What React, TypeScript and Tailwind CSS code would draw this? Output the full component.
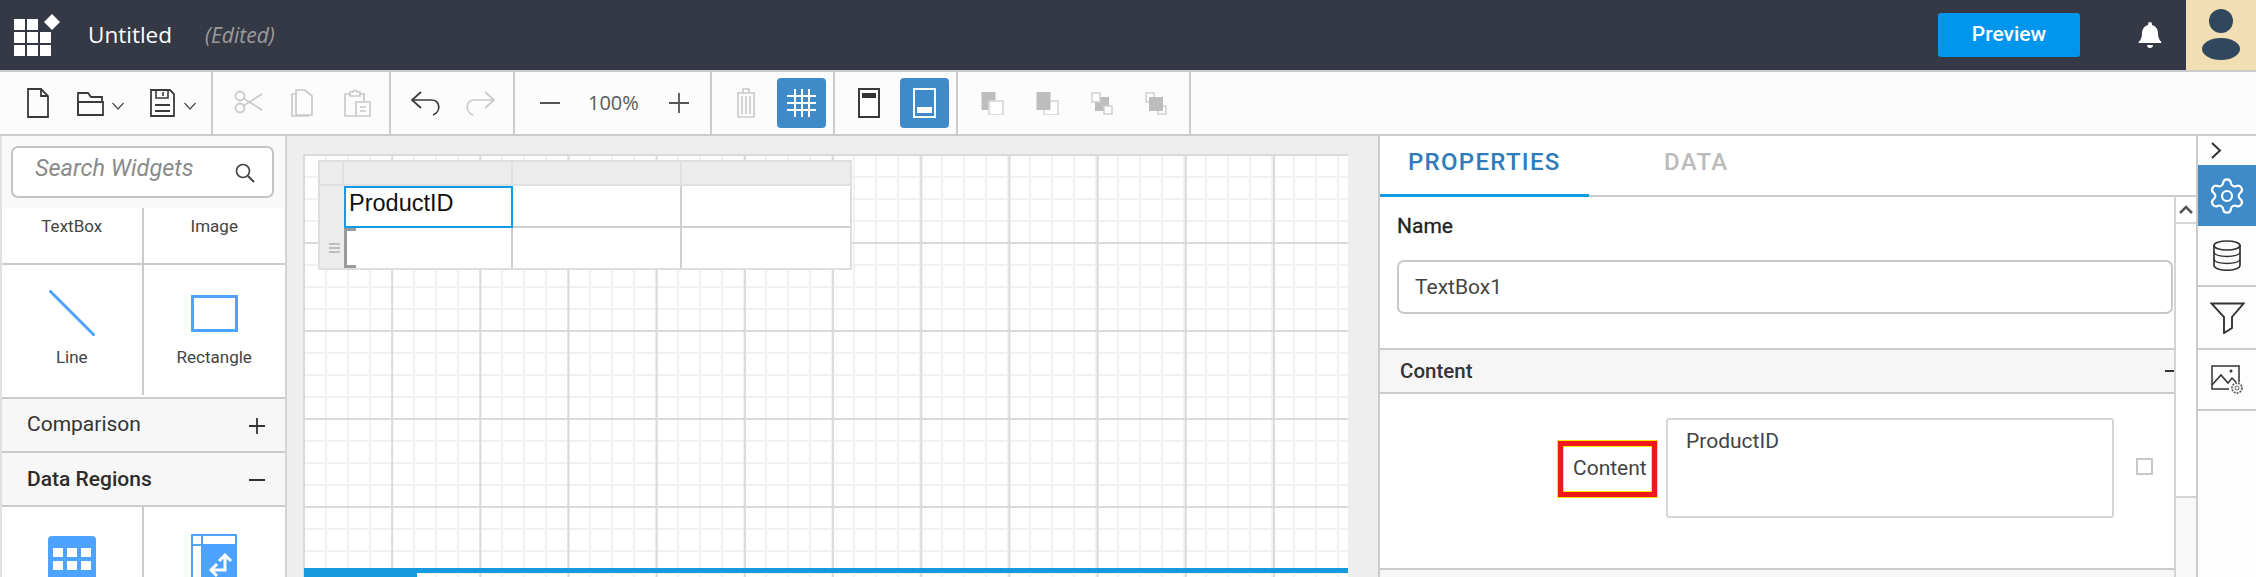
import React from "react";
import { Settings } from "lucide-react";

const Ico = ({ w, h, vb, cls = "", children }: { w: number; h: number; vb?: string; cls?: string; children: React.ReactNode }) => (
  <svg width={w} height={h} viewBox={vb ?? `0 0 ${w} ${h}`} fill="none" className={`shrink-0 ${cls}`}>
    {children}
  </svg>
);

const DARK = "#3a3a3a";
const DIS = "#c9c9c9";

const Chevron = ({ cls }: { cls: string }) => (
  <Ico w={12} h={8} cls={cls}><path d="M0.5 1L6 7L11.5 1" stroke="#555" strokeWidth="1.4" /></Ico>
);

const AlignIcon = ({ kind, cls }: { kind: number; cls: string }) => (
  <Ico w={23} h={23} cls={cls}>
    {kind === 0 && (<><rect x="0.5" y="0" width="14" height="18" fill="#bdbdbd" /><rect x="8" y="9" width="14" height="14" fill="#fff" stroke="#d6d6d6" strokeWidth="1.6" /></>)}
    {kind === 1 && (<><rect x="8" y="9" width="14" height="14" fill="#fff" stroke="#d6d6d6" strokeWidth="1.6" /><rect x="0.5" y="0" width="14" height="18" fill="#bdbdbd" /></>)}
    {kind === 2 && (<><rect x="4" y="5" width="14" height="14" fill="#bdbdbd" /><rect x="1" y="1" width="8" height="9" fill="#fff" stroke="#d0d0d0" strokeWidth="1.5" /><rect x="13" y="14" width="8" height="8" fill="#fff" stroke="#d0d0d0" strokeWidth="1.5" /></>)}
    {kind === 3 && (<><rect x="1" y="1" width="8" height="9" fill="#fff" stroke="#d0d0d0" strokeWidth="1.5" /><rect x="13" y="14" width="8" height="8" fill="#fff" stroke="#d0d0d0" strokeWidth="1.5" /><rect x="4" y="5" width="14" height="14" fill="#bdbdbd" /></>)}
  </Ico>
);

function Header() {
  return (
    <header className="h-[70px] bg-[#353945] flex items-center shrink-0">
      <div className="relative ml-[14px] w-[45px] h-[38px] mt-[6px] shrink-0">
        <div className="grid grid-cols-[11px_11px_11px] grid-rows-[11px_11px_11px] gap-[2px]">
          {[0, 1, 2, 3, 4, 5, 6, 7, 8].map((i) => (
            <div key={i} className={i === 2 ? "" : "bg-white"} />
          ))}
        </div>
        <svg width="16" height="16" viewBox="0 0 16 16" className="absolute left-[30px] top-[-5px]">
          <path d="M8 0L16 8L8 16L0 8Z" fill="#fff" />
        </svg>
      </div>
      <span className="ml-[29px] text-[22.5px] text-white font-['Open_Sans']">Untitled</span>
      <span className="ml-[33px] mt-[1px] text-[21px] italic text-[#9b9b9b] font-['Open_Sans']">(Edited)</span>
      <button className="ml-auto w-[142px] h-[44px] rounded-[3px] bg-[#0096ee] text-white text-[21px] font-medium font-[Roboto]">Preview</button>
      <svg width="24" height="26" viewBox="0 0 24 26" className="ml-[58px]">
        <path d="M12 0c1.2 0 2 .8 2 2v1c4 1 6 4.500 6 8.500 0 3.500 1 6 3 8 .8.800.5 1.500-.5 1.500h-21c-1 0-1.300-.7-.5-1.500 2-2 3-4.500 3-8C4 7.500 6 4 10 3V2c0-1.200.8-2 2-2z" fill="#fff" />
        <path d="M9 23h6c0 1.800-1.300 3-3 3s-3-1.200-3-3z" fill="#fff" />
      </svg>
      <div className="ml-[24px] w-[70px] h-[70px] bg-[#f2deb3] flex flex-col items-center shrink-0">
        <div className="mt-[9px] w-[24px] h-[24px] rounded-full bg-[#31475e]" />
        <div className="mt-[5px] w-[38px] h-[22px] rounded-[50%] bg-[#31475e]" />
      </div>
    </header>
  );
}

const Group = ({ w, children }: { w: string; children: React.ReactNode }) => (
  <div className={`${w} h-full border-r-2 border-[#cbcbcb] flex items-center shrink-0`}>{children}</div>
);

function Toolbar() {
  return (
    <div className="h-[66px] shrink-0 bg-[#fcfcfc] border-y-2 border-[#cbcbcb] flex">
      <Group w="w-[213px]">
        <Ico w={22} h={30} cls="ml-[27px]"><path d="M1 1H14L21 8V29H1Z M14 1V8H21" stroke={DARK} strokeWidth="1.8" /></Ico>
        <Ico w={27} h={25} cls="ml-[28px]">
          <path d="M1 24V2H11L14 6H25V11" stroke={DARK} strokeWidth="1.8" />
          <path d="M1 11H26V24H1Z" stroke={DARK} strokeWidth="1.8" />
        </Ico>
        <Chevron cls="ml-[8px] mt-[6px]" />
        <Ico w={25} h={28} cls="ml-[26px]">
          <path d="M1 1H20L24 5V27H1Z" stroke={DARK} strokeWidth="1.8" />
          <path d="M6 1V9H18V1M13 3V7" stroke={DARK} strokeWidth="1.6" />
          <path d="M5 16H20M5 22H20" stroke={DARK} strokeWidth="2" />
        </Ico>
        <Chevron cls="ml-[9px] mt-[6px]" />
      </Group>
      <Group w="w-[178px]">
        <Ico w={29} h={24} cls="ml-[21px] -mt-[2px]">
          <circle cx="6" cy="6" r="4.500" stroke={DIS} strokeWidth="1.8" />
          <circle cx="6" cy="18" r="4.500" stroke={DIS} strokeWidth="1.8" />
          <path d="M9 8L28 20M9 16L28 4" stroke={DIS} strokeWidth="1.8" />
        </Ico>
        <Ico w={22} h={28} cls="ml-[28px]">
          <path d="M5 1H14L21 7V26H5Z M5 5H1V27H17V26" stroke={DIS} strokeWidth="1.7" />
        </Ico>
        <Ico w={28} h={28} cls="ml-[30px]">
          <path d="M7 3H10C10 1 14 1 14 3H17V7H7ZM7 5H2V27H13M17 5H21V12" stroke={DIS} strokeWidth="1.7" />
          <path d="M13 13H27V27H13ZM17 18H23M17 22H23" stroke={DIS} strokeWidth="1.6" />
        </Ico>
      </Group>
      <Group w="w-[124px]">
        <Ico w={30} h={25} cls="ml-[20px]"><path d="M10 1L1 9L10 17M1 9H20C30 9 30 21 22 24" stroke={DARK} strokeWidth="1.7" /></Ico>
        <Ico w={30} h={25} cls="ml-[24px]"><path d="M20 1L29 9L20 17M29 9H10C0 9 0 21 8 24" stroke={DIS} strokeWidth="1.7" /></Ico>
      </Group>
      <Group w="w-[197px]">
        <Ico w={20} h={2} cls="ml-[25px]"><rect width="20" height="2" fill="#555" /></Ico>
        <span className="ml-[28px] w-[50px] text-[20px] text-[#5a5a5a] font-['Open_Sans'] leading-none whitespace-nowrap">100%</span>
        <Ico w={20} h={20} cls="ml-[31px]"><path d="M10 0V20M0 10H20" stroke="#555" strokeWidth="1.8" /></Ico>
      </Group>
      <Group w="w-[123px]">
        <Ico w={20} h={30} cls="ml-[24px]">
          <path d="M1 5H19M7 5V1H13V5M2 5V29H18V5M6 8V26M10 8V26M14 8V26" stroke={DIS} strokeWidth="1.6" />
        </Ico>
        <div className="ml-[21px] w-[49px] h-[50px] rounded-[4px] bg-[#3f8bca] flex items-center justify-center">
          <Ico w={29} h={28}><path d="M8 0V28M15 0V28M22 0V28M0 7H29M0 14H29M0 21H29" stroke="#fff" strokeWidth="2" /></Ico>
        </div>
      </Group>
      <Group w="w-[123px]">
        <Ico w={22} h={30} cls="ml-[23px]">
          <rect x="1" y="1" width="20" height="28" fill="#fff" stroke={DARK} strokeWidth="2" />
          <rect x="4" y="5" width="14" height="5" fill="#333" />
        </Ico>
        <div className="ml-[20px] w-[49px] h-[50px] rounded-[4px] bg-[#3f8bca] flex items-center justify-center">
          <Ico w={23} h={30}>
            <rect x="1" y="1" width="21" height="28" stroke="#fff" strokeWidth="2" />
            <rect x="4" y="19" width="15" height="6" fill="#fff" />
          </Ico>
        </div>
      </Group>
      <Group w="w-[233px]">
        <AlignIcon kind={0} cls="ml-[23px]" />
        <AlignIcon kind={1} cls="ml-[32px]" />
        <AlignIcon kind={2} cls="ml-[32px]" />
        <AlignIcon kind={3} cls="ml-[31px]" />
      </Group>
    </div>
  );
}

const Cell = ({ h, border = true, children }: { h: string; border?: boolean; children?: React.ReactNode }) => (
  <div className={`${h} ${border ? "border-r-2 border-[#cbcbcb]" : ""} w-1/2 flex flex-col items-center`}>{children}</div>
);

const LBL = "text-[17px] text-[#444] font-[Roboto] leading-none";

function LeftPanel() {
  return (
    <aside className="w-[285px] h-full shrink-0 border-l-2 border-[#e0e0e0] flex flex-col bg-white overflow-hidden font-[Roboto]">
      <div className="h-[72px] shrink-0 bg-[#f9f9f9] pt-[10px] pl-[9px]">
        <div className="w-[263px] h-[52px] bg-white border-2 border-[#c4c4c4] rounded-[7px] flex items-center pl-[22px]">
          <span className="text-[23.5px] italic text-[#8a8a8a] -mt-[6px]">Search Widgets</span>
          <svg width="20" height="20" viewBox="0 0 20 20" fill="none" className="ml-auto mr-[17px] mt-[2px]">
            <circle cx="8" cy="8" r="6.500" stroke="#444" strokeWidth="1.7" />
            <path d="M13 13L19 19" stroke="#444" strokeWidth="2" />
          </svg>
        </div>
      </div>
      <div className="h-[57px] shrink-0 flex border-b-2 border-[#cbcbcb]">
        <Cell h="h-full"><span className={`${LBL} mt-[10px]`}>TextBox</span></Cell>
        <Cell h="h-full" border={false}><span className={`${LBL} mt-[10px]`}>Image</span></Cell>
      </div>
      <div className="h-[134px] shrink-0 flex border-b-2 border-[#cbcbcb]">
        <Cell h="h-[130px]">
          <svg width="46" height="46" viewBox="0 0 46 46" className="mt-[25px]"><path d="M1.500 1.500L44.500 44.500" stroke="#4da3ff" strokeWidth="3" strokeLinecap="round" /></svg>
          <span className={`${LBL} mt-[13px]`}>Line</span>
        </Cell>
        <Cell h="h-[130px]" border={false}>
          <svg width="47" height="37" viewBox="0 0 47 37" className="mt-[30px]"><rect x="1.500" y="1.500" width="44" height="34" fill="none" stroke="#4da3ff" strokeWidth="3" /></svg>
          <span className={`${LBL} mt-[17px]`}>Rectangle</span>
        </Cell>
      </div>
      <div className="h-[54px] shrink-0 bg-[#f7f7f7] border-b-2 border-[#cbcbcb] flex items-center px-[25px] text-[21px] text-[#333]">
        Comparison
        <svg width="16" height="16" viewBox="0 0 16 16" className="ml-auto mr-[-5px] mt-[2px]"><path d="M8 0V16M0 8H16" stroke="#333" strokeWidth="1.800" /></svg>
      </div>
      <div className="h-[54px] shrink-0 bg-[#f7f7f7] border-b-2 border-[#cbcbcb] flex items-center px-[25px] pt-[2px] text-[21px] font-medium text-[#2c2c2c]">
        Data Regions
        <svg width="16" height="2" viewBox="0 0 16 2" className="ml-auto mr-[-5px]"><rect width="16" height="2" fill="#333" /></svg>
      </div>
      <div className="flex-1 flex">
        <Cell h="h-full">
          <div className="mt-[29px] w-[48px] h-[60px] rounded-[4px] bg-[#4da3ff] pt-[12px] px-[5px] grid grid-cols-3 gap-[4px] content-start">
            {[0, 1, 2, 3, 4, 5].map((i) => <div key={i} className="h-[9px] bg-white" />)}
          </div>
        </Cell>
        <Cell h="h-full" border={false}>
          <svg width="46" height="60" viewBox="0 0 46 60" className="mt-[27px]">
            <rect width="46" height="60" fill="#4da3ff" />
            <rect x="2" y="2" width="8" height="8" fill="#fff" />
            <rect x="12" y="2" width="32" height="8" fill="#fff" />
            <rect x="2" y="12" width="8" height="46" fill="#fff" />
            <path d="M34 32V22M28 27L34 21L40 27M34 30V36H22M26 30L20 36L26 42" stroke="#fff" strokeWidth="3" fill="none" />
          </svg>
        </Cell>
      </div>
    </aside>
  );
}

function Canvas() {
  return (
    <main className="flex-1 min-w-0 h-full bg-[#eeeeee] border-l-2 border-[#d4d4d4] pl-[16px] pr-[30px] pt-[18px] overflow-hidden">
      <div className="h-full bg-white bg-[linear-gradient(to_right,#dadada_2px,transparent_2px),linear-gradient(to_bottom,#dadada_2px,transparent_2px),linear-gradient(to_right,#f1f1f1_2px,transparent_2px),linear-gradient(to_bottom,#f1f1f1_2px,transparent_2px)] bg-[size:88.2px_88px,88px_88px,22px_22px,22px_22px] flex flex-col">
        <div className="ml-[15px] mt-[6px] w-[534px] h-[110px] shrink-0 grid grid-cols-[24px_169px_169px_168px] grid-rows-[24px_42px_40px] bg-white border-2 border-[#dedede]">
          <div className="bg-[#ececec] border-r-2 border-b-2 border-[#e0e0e0]" />
          <div className="bg-[#ececec] border-r-2 border-b-2 border-[#e0e0e0]" />
          <div className="bg-[#ececec] border-r-2 border-b-2 border-[#e0e0e0]" />
          <div className="bg-[#ececec] border-b-2 border-[#e0e0e0]" />
          <div className="bg-[#ececec]" />
          <div className="border-2 border-[#109be6] pl-[3px] pb-[6px] flex items-center text-[23.5px] text-[#111] font-['Liberation_Sans'] leading-none">ProductID</div>
          <div className="border-r-2 border-b-2 border-[#d0d0d0]" />
          <div className="border-b-2 border-[#d0d0d0]" />
          <div className="bg-[#ececec] flex flex-col items-center justify-center gap-[2px] pl-[4px]">
            <div className="w-[11px] h-[2px] bg-[#bdbdbd]" />
            <div className="w-[11px] h-[2px] bg-[#bdbdbd]" />
            <div className="w-[11px] h-[2px] bg-[#bdbdbd]" />
          </div>
          <div className="relative border-r-2 border-[#d0d0d0]">
            <div className="absolute left-0 top-0 bottom-0 w-[12px] border-l-[3px] border-y-[3px] border-[#9a9a9a]" />
          </div>
          <div className="border-r-2 border-[#d0d0d0]" />
          <div />
        </div>
        <div className="ml-[1px] mt-[298px] h-[5px] shrink-0 bg-[#159ade]" />
        <div className="ml-[1px] w-[113px] h-[5px] shrink-0 bg-[#159ade]" />
      </div>
    </main>
  );
}

function RightPanel() {
  return (
    <section className="w-[818px] h-full shrink-0 border-l-2 border-[#cbcbcb] flex flex-col bg-white font-[Roboto]">
      <div className="h-[61px] shrink-0 flex border-b-2 border-[#cbcbcb] text-[24px] font-medium tracking-[1.3px]">
        <div className="w-[209px] -mb-[2px] border-b-[3px] border-[#129ae2] text-[#2f7cba] pl-[28px] pt-[8px]">PROPERTIES</div>
        <div className="ml-[75px] text-[#bbbbbb] pt-[8px]">DATA</div>
      </div>
      <div className="flex-1 min-h-0 flex">
        <div className="flex-1 min-w-0 flex flex-col">
          <div className="h-[151px] shrink-0 pl-[17px] pr-[0px]">
            <div className="mt-[16px] text-[21px] text-[#222] [-webkit-text-stroke:0.3px_#222] leading-[26px]">Name</div>
            <div className="mt-[21px] mr-[1px] h-[54px] border-2 border-[#c8c8c8] rounded-[7px] flex items-center pl-[16px] pt-[2px] text-[21px] text-[#444]">TextBox1</div>
          </div>
          <div className="h-[46px] shrink-0 bg-[#f6f6f6] border-y-2 border-[#cbcbcb] flex items-center pl-[20px] pr-[0px] text-[20.5px] font-medium text-[#333]">
            Content
            <div className="ml-auto w-[9px] h-[2px] bg-[#333]" />
          </div>
          <div className="h-[176px] shrink-0 flex border-b-2 border-[#cbcbcb]">
            <div className="ml-[177px] mt-[46px] w-[101px] h-[58px] border-[6px] border-[#f01818] outline outline-1 outline-[#ffe600] -outline-offset-1 shadow-[inset_0_0_0_1px_#ffe600] flex items-center pl-[10px] text-[21px] text-[#444] shrink-0">Content</div>
            <div className="ml-[8px] mt-[24px] w-[448px] h-[100px] border-2 border-[#d6d6d6] rounded-[3px] pl-[18px] pt-[8px] text-[21px] text-[#444] shrink-0 leading-[26px]">ProductID</div>
            <div className="ml-[22px] mt-[64px] w-[17px] h-[17px] border-2 border-[#c8c8c8] shrink-0" />
          </div>
          <div className="flex-1 bg-[#f7f7f7]" />
        </div>
        <div className="w-[22px] shrink-0 border-l-2 border-[#d4d4d4] flex flex-col">
          <div className="h-[27px] shrink-0 border-b-2 border-[#d8d8d8] flex items-center justify-center">
            <svg width="14" height="9" viewBox="0 0 14 9"><path d="M1 8L7 2L13 8" stroke="#555" strokeWidth="2.500" fill="none" /></svg>
          </div>
          <div className="h-[274px] shrink-0 border-b-2 border-[#d4d4d4] bg-white" />
          <div className="flex-1 bg-[#f8f8f8]" />
        </div>
      </div>
    </section>
  );
}

function RightStrip() {
  const cell = "shrink-0 border-b-2 border-[#cbcbcb] flex items-center justify-center";
  return (
    <nav className="w-[60px] h-full shrink-0 border-l-2 border-[#cbcbcb] bg-[#fdfdfd] flex flex-col">
      <div className="h-[29px] shrink-0 flex items-center pl-[12px]">
        <svg width="12" height="17" viewBox="0 0 12 17"><path d="M2 1L10 8.500L2 16" stroke="#333" strokeWidth="2" fill="none" /></svg>
      </div>
      <div className="h-[61px] shrink-0 bg-[#3f8bca] flex items-center justify-center">
        <Settings size={40} color="#fff" strokeWidth={1.3} />
      </div>
      <div className={`h-[61px] ${cell}`}>
        <svg width="28" height="31" viewBox="0 0 28 31" fill="none">
          <path d="M1 5V25C1 32 27 32 27 25V5" stroke="#333" strokeWidth="1.700" />
          <ellipse cx="14" cy="5.500" rx="13" ry="4.500" stroke="#333" strokeWidth="1.700" />
          <path d="M1 12C1 18 27 18 27 12M1 19C1 25 27 25 27 19" stroke="#333" strokeWidth="1.300" />
        </svg>
      </div>
      <div className={`h-[63px] ${cell}`}>
        <svg width="35" height="32" viewBox="0 0 35 32" fill="none">
          <path d="M1.500 1.500H33.500L22 15V26L14 31V15Z" stroke="#333" strokeWidth="1.900" />
        </svg>
      </div>
      <div className={`h-[61px] ${cell}`}>
        <svg width="33" height="29" viewBox="0 0 33 29" fill="none">
          <path d="M28 17V1H1V24H18" stroke="#333" strokeWidth="1.500" />
          <path d="M1 20L10 10L17 18L21 13L25 17" stroke="#333" strokeWidth="1.500" />
          <circle cx="20" cy="6" r="1.500" fill="#333" />
          <circle cx="26" cy="23" r="5" stroke="#666" strokeWidth="1.800" strokeDasharray="2 1" />
          <circle cx="26" cy="23" r="2" stroke="#666" strokeWidth="1" />
        </svg>
      </div>
      <div className="flex-1" />
    </nav>
  );
}

export default function App() {
  return (
    <div className="w-[2256px] h-[577px] overflow-hidden flex flex-col bg-white">
      <Header />
      <Toolbar />
      <div className="flex-1 min-h-0 flex">
        <LeftPanel />
        <Canvas />
        <RightPanel />
        <RightStrip />
      </div>
    </div>
  );
}
